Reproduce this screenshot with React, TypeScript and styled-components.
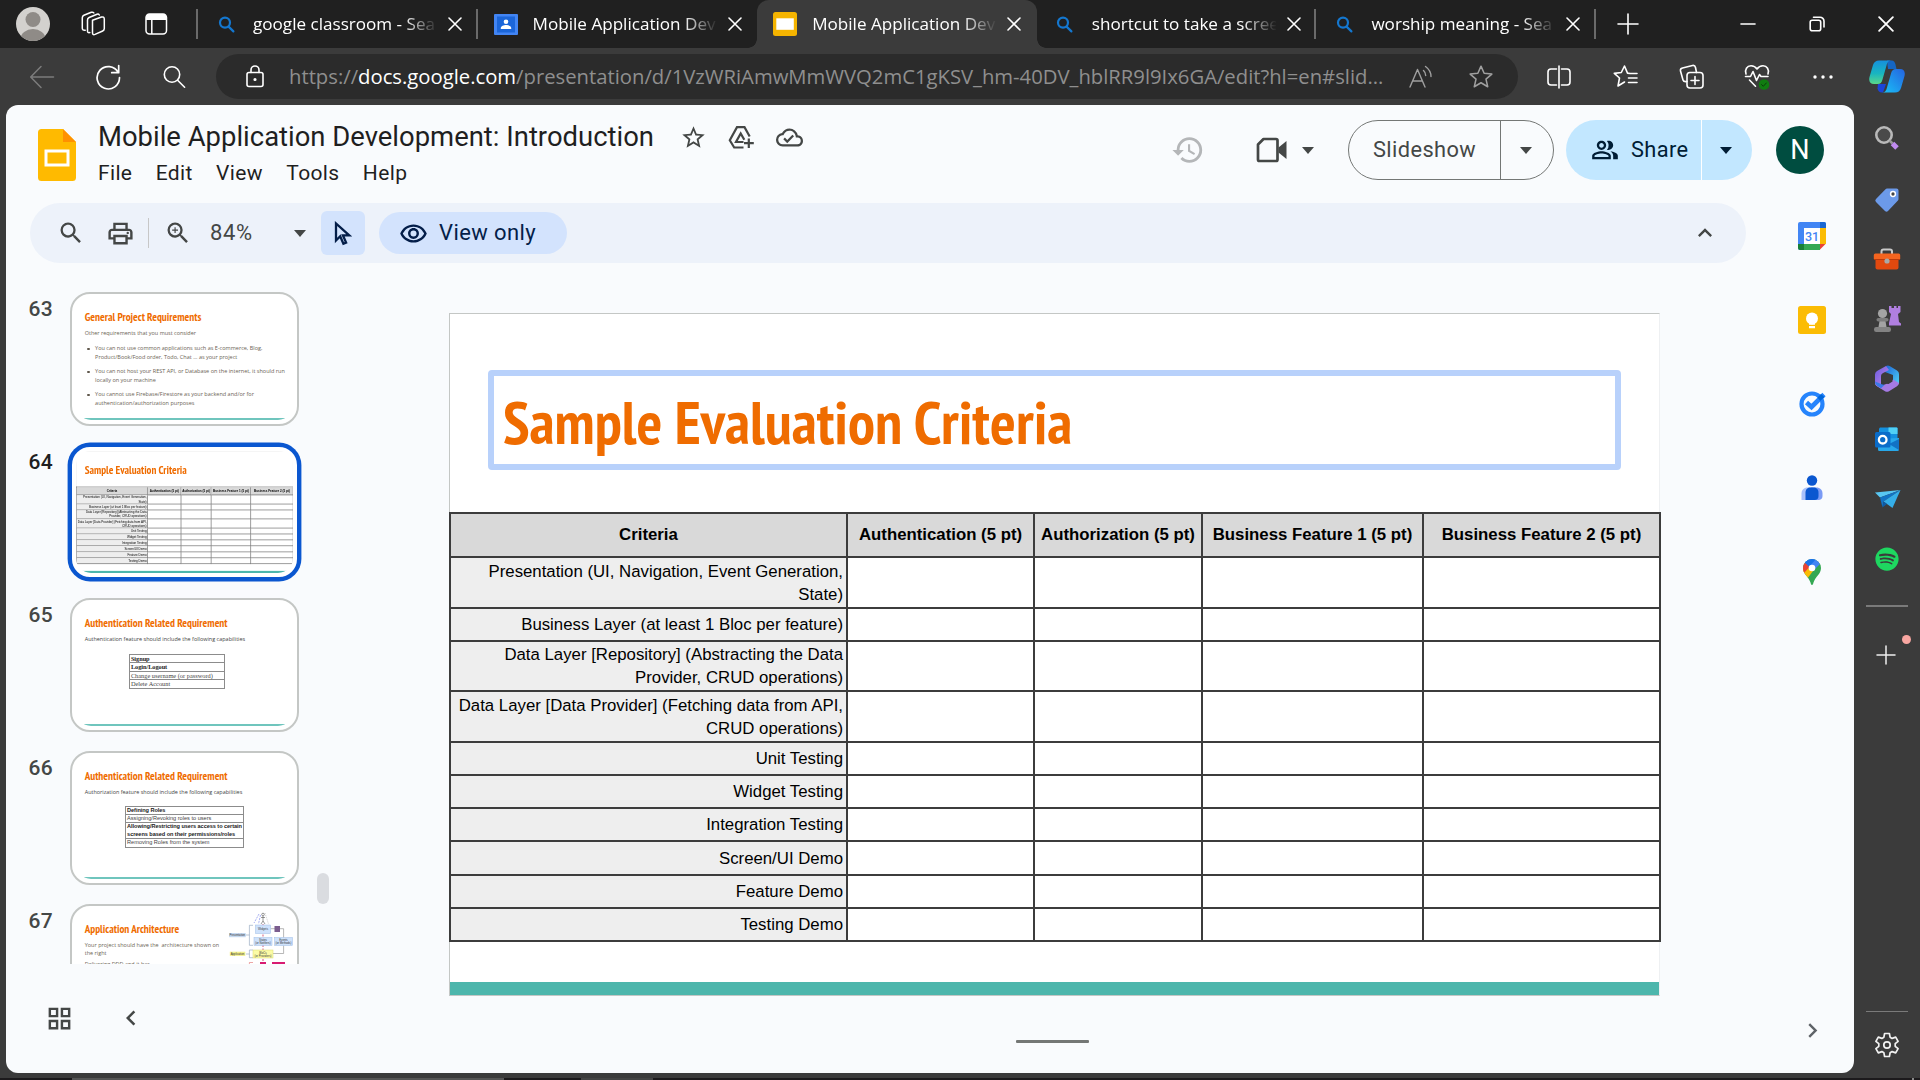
import React from 'react';
import styled, { createGlobalStyle, css } from 'styled-components';
import {
  MdSearch, MdOutlinePrint, MdZoomIn, MdOutlineRemoveRedEye, MdKeyboardArrowUp,
  MdHistory, MdOutlinePeopleAlt, MdStarBorder, MdOutlineCloudDone,
  MdGridView, MdChevronLeft, MdChevronRight,
} from 'react-icons/md';
import { FaSpotify } from 'react-icons/fa';

const UI = `Roboto, "Liberation Sans", sans-serif`;
const CHROME = `"Open Sans", "Noto Sans", sans-serif`;
const NARROW = `"PT Sans Narrow", "Open Sans", sans-serif`;
const ARIAL = `"Liberation Sans", Arial, sans-serif`;

const GlobalStyle = createGlobalStyle`
  *, *::before, *::after { box-sizing: border-box; }
  body { margin: 0; background: #3b3b3b; font-family: ${UI}; overflow: hidden; }
  svg { display: block; flex: none; }
`;

/* ---------- browser window ---------- */
const Window = styled.div`
  width: 1920px; height: 1080px; display: flex; flex-direction: column; background: #3b3b3b; overflow: hidden;
`;
const TabBar = styled.div`
  height: 48px; flex: none; display: flex; align-items: center; background: #202020; color: #fff;
`;
const Slot = styled.div<{ $w: number }>`
  width: ${p => p.$w}px; flex: none; display: flex; align-items: center; justify-content: center; color: #fff;
`;
const StripDivider = styled.div`
  width: 2px; height: 30px; margin: 0 0 0 4px; background: #6a6a6a;
`;
const Tab = styled.div<{ $active?: boolean; $divider?: boolean }>`
  position: relative; flex: none; width: 279.6px; height: 48px; display: flex; align-items: center; padding-left: 16px;
  ${p => p.$active && css`
    background: #3b3b3b; border-radius: 12px 12px 0 0;
    &::before, &::after { content: ''; position: absolute; bottom: 0; width: 9px; height: 9px; }
    &::before { left: -9px; background: radial-gradient(circle at 0 0, transparent 8.5px, #3b3b3b 9px); }
    &::after { right: -9px; background: radial-gradient(circle at 100% 0, transparent 8.5px, #3b3b3b 9px); }
  `}
  ${p => p.$divider && css`
    background: linear-gradient(#6a6a6a, #6a6a6a) right 0 center / 2px 30px no-repeat;
  `}
`;
const TabIcon = styled.div`width: 24px; display: flex; justify-content: center;`;
const TabLabel = styled.div`
  width: 184px; margin: 0 2px 0 15px; overflow: hidden; white-space: nowrap;
  font: 400 17.1px/26px ${CHROME}; color: #fff;
  mask-image: linear-gradient(90deg, #000 150px, transparent 185px);
`;
const TabClose = styled.div`width: 32px; display: flex; justify-content: center;`;
const WindowControls = styled.div`display: flex; margin-left: auto;`;

const AddressRow = styled.div`
  height: 57px; flex: none; display: flex; align-items: center; padding-left: 9px; background: #3b3b3b;
`;
const AddressBar = styled.div`
  width: 1302px; height: 45px; margin: 0 8px 0 9px; display: flex; align-items: center;
  padding-left: 30px; border-radius: 23px; background: #2b2b2b; color: #fff;
`;
const Url = styled.div`
  width: 1098px; margin-left: 25px; padding-bottom: 2px; white-space: nowrap; font: 400 20.25px/30px ${CHROME}; color: #8f8f8f;
  b { font-weight: 400; color: #fff; }
`;

const Body = styled.div`flex: 1; display: flex; padding: 0 0 5px 6px; min-height: 0;`;
const Sidebar = styled.div`
  width: 66px; flex: none; display: flex; flex-direction: column; align-items: center;
`;
const SideItem = styled.div<{ $h: number }>`
  position: relative; height: ${p => p.$h}px; flex: none; width: 66px; display: flex; align-items: center; justify-content: center;
`;
const SideRule = styled.div`width: 42px; height: 1.5px; background: #7a7a7a; flex: none;`;
const Dot = styled.i`
  position: absolute; right: 9px; top: 28px; width: 9px; height: 9px; border-radius: 50%; background: #f8a6a1;
`;
const SideGap = styled.div`height: 16px; flex: none;`;
const SidePlus = styled.div`
  position: relative; width: 66px; height: 97px; flex: none; padding-right: 2px;
  display: flex; align-items: center; justify-content: center;
`;
const SideGear = styled.div`display: flex; color: #f2f2f2; padding-top: 5px;`;
const Spacer = styled.div`flex: 1;`;
const TaskStrip = styled.div`height: 2px; flex: none; display: flex;`;
const Strip = styled.div<{ $w?: number; $c: string }>`
  ${p => (p.$w ? `width: ${p.$w}px;` : 'flex: 1;')} background: ${p => p.$c};
`;

/* ---------- document page ---------- */
const Page = styled.div`
  width: 1848px; flex: none; display: flex; flex-direction: column; overflow: hidden;
  border-radius: 12px; background: #f9fbfd; color: #1f1f1f;
`;
const Header = styled.div`
  height: 98px; flex: none; display: flex; padding: 15px 30px 0 32px;
`;
const Logo = styled.div`padding-top: 9px;`;
const TitleBlock = styled.div`margin-left: 22px;`;
const TitleRow = styled.div`height: 33px; display: flex; align-items: center; color: #444746;`;
const DocTitle = styled.div`
  width: 571px; padding-top: 1px; white-space: nowrap; font: 400 27.45px/32px ${UI}; color: #1f1f1f;
`;
const TitleIcon = styled.div`width: 48.3px; display: flex; justify-content: center; padding-top: 2px;`;
const Menus = styled.div`
  display: flex; gap: 23.4px; margin-top: 8px; font: 400 21px/24px ${UI}; letter-spacing: .35px; color: #1f1f1f;
`;
const HeaderActions = styled.div`
  height: 60px; margin-left: auto; display: flex; align-items: center; color: #444746;
`;
const HeaderSlot = styled.div`width: 84px; display: flex; justify-content: center;`;
const CallCaret = styled.div`width: 34px; margin: 0 13px 0 -13px;`;
const SplitButton = styled.div<{ $share?: boolean }>`
  height: 60px; display: flex; border-radius: 30px; overflow: hidden;
  font: 450 21.8px/58px ${UI}; letter-spacing: .4px;
  ${p => p.$share
    ? css`width: 186px; margin-left: 12px; background: #c2e7ff; color: #001d35; line-height: 60px;`
    : css`width: 206px; border: 1px solid #747775; color: #444746;`}
`;
const SplitMain = styled.div<{ $share?: boolean }>`
  display: flex; align-items: center;
  ${p => p.$share
    ? css`width: 136px; padding-left: 25px; gap: 12px; border-right: 1.5px solid #fff;`
    : css`width: 152px; padding-left: 24px; border-right: 1px solid #747775;`}
`;
const SplitArrow = styled.div`flex: 1; display: flex; align-items: center; justify-content: center; padding-right: 2px;`;
const Avatar = styled.div`
  width: 48px; height: 48px; margin-left: 24px; border-radius: 50%; background: #004d40; color: #fff;
  font: 400 27px/49px ${UI}; text-align: center;
`;

const Main = styled.div`flex: 1; display: flex; min-height: 0;`;
const Left = styled.div`width: 1764px; flex: none; display: flex; flex-direction: column;`;
const Toolbar = styled.div`
  width: 1716px; height: 60px; margin-left: 24px; flex: none; display: flex; align-items: center;
  padding: 0 27px 0 15px; border-radius: 30px; background: #edf2fa; color: #444746;
`;
const Tool = styled.div<{ $w: number }>`width: ${p => p.$w}px; display: flex; justify-content: center;`;
const ToolRule = styled.div`width: 1px; height: 30px; margin-left: 3px; background: #c7c7c7;`;
const Zoom = styled.div`
  width: 73px; margin-left: 3px; font: 450 22px/30px ${UI}; letter-spacing: .6px; color: #444746;
`;
const Pointer = styled.div`
  width: 44px; height: 44px; margin-left: 4px; border-radius: 6px; background: #d3e3fd;
  display: flex; align-items: center; justify-content: center;
`;
const ViewOnly = styled.div`
  width: 188px; height: 42px; margin-left: 14px; display: flex; align-items: center; gap: 11px; padding-left: 20px;
  border-radius: 21px; background: #d3e3fd; color: #041e49; font: 450 22px/40px ${UI}; letter-spacing: .4px; white-space: nowrap;
`;
const Workspace = styled.div`flex: 1; display: flex; min-height: 0;`;
const Film = styled.div`width: 330px; flex: none; display: flex; flex-direction: column;`;
const FilmScroll = styled.div`height: 701px; display: flex; overflow: hidden;`;
const FilmList = styled.div`width: 311px; padding-top: 29px; display: flex; flex-direction: column; gap: 19px;`;
const FilmRow = styled.div`height: 134px; flex: none; display: flex;`;
const FilmNo = styled.div<{ $on?: boolean }>`
  width: 47px; margin-right: 17px; text-align: right; font: 500 21px/34px ${UI}; letter-spacing: .3px;
  color: ${p => (p.$on ? '#1f1f1f' : '#444746')};
`;
const Frame = styled.div<{ $on?: boolean }>`
  width: 229px; height: 134px; padding: 4px; background: #fff; border-radius: 20px;
  border: 2px solid ${p => (p.$on ? '#0b57d0' : '#c4c7c5')};
  ${p => p.$on && css`box-shadow: 0 0 0 2.4px #0b57d0;`}
`;
const Thumb = styled.div`
  width: 217px; height: 122px; display: flex; flex-direction: column; overflow: hidden; border-radius: 15px; background: #fff;
`;
const ThumbBody = styled.div`flex: 1; display: flex; min-height: 0;`;
const ThumbText = styled.div`flex: 1; min-width: 0; padding: 12px 0 0 8.7px; white-space: nowrap;`;
const ThumbBar = styled.div`height: 2px; background: #6fc5bd;`;
const ThumbTitle = styled.div`font: 700 11.05px/14px ${NARROW}; color: #ef6c00;`;
const ThumbPara = styled.div<{ $dark?: boolean; $ls?: number; $mt?: number }>`
  margin-top: ${p => p.$mt ?? 5}px; font: 400 5.47px/8px ${CHROME}; letter-spacing: ${p => p.$ls || 0}px; color: ${p => (p.$dark ? '#444' : '#6b6355')};
`;
const Bullets = styled.ul`
  margin: 6.5px 0 0; padding: 0; list-style: none; font: 400 5.52px/9.9px ${CHROME}; color: #6b6355;
`;
const Bullet = styled.li`
  display: flex; margin-bottom: 3.2px;
  &::before { content: ''; width: 2.4px; height: 2.4px; margin: 4px 5.4px 0 2.6px; border-radius: 50%; background: #5f574b; }
`;
const MiniTable = styled.div<{ $l: number; $w: number; $t: number; $serif?: boolean }>`
  width: ${p => p.$w}px; margin: ${p => p.$t}px 0 0 ${p => p.$l}px; border: solid #8c8c8c; border-width: 1px 1px 0 1px;
  font: 400 ${p => (p.$serif ? '6.35px' : '5.6px')}/7.5px ${p => (p.$serif ? '"Liberation Serif", serif' : ARIAL)}; color: #444;
`;
const MiniCell = styled.div<{ $b?: boolean; $h?: number }>`
  height: ${p => p.$h || 8.45}px; padding-left: .6px; border-bottom: 1px solid #8c8c8c; font-weight: ${p => (p.$b ? 700 : 400)};
  ${p => p.$b && 'color: #222; letter-spacing: -.06px;'}
`;
const Shrink = styled.div`width: 1211px; height: 683px; flex: none; transform: scale(.1792); transform-origin: 0 0;`;
const Track = styled.div`width: 12px; padding-top: 610px;`;
const Grip = styled.div`height: 31px; border-radius: 6px; background: #dadce0;`;
const FilmFoot = styled.div`
  height: 109px; display: flex; align-items: center; gap: 42px; padding: 0 0 1px 39px; color: #444746;
`;

const Canvas = styled.div`
  width: 1434px; flex: none; display: flex; flex-direction: column; align-items: flex-start;
`;
const SlideFrame = styled.div`margin: 50px 0 0 113px;`;
const SlideBox = styled.div`
  width: 1211px; height: 683px; display: flex; flex-direction: column; background: #fff;
  border: 1px solid #c4c7c5; border-right-color: #eef0f2;
`;
const TitleArea = styled.div<{ $focus?: boolean }>`
  width: 1133px; height: 100px; margin: 56px 0 0 38px; padding: 0 0 0 ${p => (p.$focus ? 9 : 4)}px; border-radius: 4px; flex: none;
  border: 6px solid ${p => (p.$focus ? '#b8d1fb' : 'transparent')};
  font: 700 60.55px/92px ${NARROW}; color: #ef6c00; white-space: nowrap;
`;
const Grid = styled.div<{ $line: number; $c: string }>`
  --line: ${p => p.$line}px; --ink: ${p => p.$c};
  width: 1212px; margin: 42px 0 0 -1px; flex: none; display: grid;
  grid-template-columns: 397px 187px 168px 221px 237px;
  grid-template-rows: 44px 51px 33px 50px 51px 33px 33px 33px 34px 33px 33px;
  border: solid var(--ink); border-width: var(--line) 0 0 var(--line);
`;
const Cell = styled.div<{ $kind?: 'head' | 'row' }>`
  border: solid var(--ink); border-width: 0 var(--line) var(--line) 0;
  font: 400 16.8px/22.6px ${ARIAL}; color: #000; display: flex; align-items: center; white-space: pre;
  ${p => p.$kind === 'head' && css`background: #d9d9d9; font-weight: 700; justify-content: center;`}
  ${p => p.$kind === 'row' && css`background: #eee; justify-content: flex-end; text-align: right; padding: 2px 3px 0 0;`}
`;
const Teal = styled.div`margin-top: auto; height: 13px; flex: none; background: #4db6ac;`;
const NotesGrip = styled.div`width: 73px; height: 3px; margin: 44px 0 0 680px; border-radius: 1px; background: #747775;`;

const Panel = styled.div`
  width: 84px; display: flex; flex-direction: column; align-items: center; padding-bottom: 28px; color: #5f6368;
`;
const PanelItem = styled.div`width: 28px; height: 84px; display: flex; align-items: center; justify-content: center;`;
const PanelTop = styled.div`margin-top: -9px;`;

/* ---------- drawn icons ---------- */
type SvgProps = { w: number; h?: number; vb?: string; stroke?: string; sw?: number; children: React.ReactNode };
const Ico = ({ w, h, vb = '0 0 24 24', stroke = 'currentColor', sw = 1.5, children }: SvgProps) => (
  <svg width={w} height={h || w} viewBox={vb} fill="none" stroke={stroke} strokeWidth={sw} strokeLinecap="round" strokeLinejoin="round">{children}</svg>
);
const Cross = ({ s }: { s: number }) => <Ico w={s} vb="0 0 14 14" sw={1.6}><path d="M1 1l12 12M13 1L1 13" /></Ico>;
const Lens = () => <Ico w={17} h={17} vb="0 0 17 17" stroke="#1477cf" sw={2.2}><circle cx="7" cy="6.6" r="5" /><path d="M10.6 10.6l4.8 4.8" /></Ico>;
const Caret = () => <svg width="14" height="7" viewBox="0 0 14 7"><path d="M1 0h12L7 7z" fill="currentColor" /></svg>;

const Person = () => (
  <svg width="34" height="34" viewBox="0 0 34 34">
    <defs><clipPath id="face"><circle cx="17" cy="17" r="17" /></clipPath></defs>
    <circle cx="17" cy="17" r="17" fill="#d3d1ce" />
    <g clipPath="url(#face)" fill="#8f8b87"><circle cx="17" cy="12.5" r="7.5" /><ellipse cx="17" cy="32" rx="12.5" ry="10" /></g>
  </svg>
);
const Workspaces = () => (
  <Ico w={26} h={26} vb="0 0 26 26">
    <path d="M12.5 9.2l9-3.2q2.6-.6 2.8 2v9.5q0 1.8-1.6 2.5l-7.7 3.4q-2.5.9-2.5-1.6V9.2z" />
    <path d="M9.8 21.6q-2.3.6-2.3-1.600V9q0-1.800 1.600-2.500L17 3.200q1.500-.6 2.300.8" />
    <path d="M5.200 19.200q-2.900.4-2.900-1.900V6.800q0-1.800 1.600-2.500l7.400-3q1.700-.5 2.500.6" />
  </Ico>
);
const TabActions = () => (
  <svg width="23" height="22" viewBox="0 0 23 22"><rect x="1" y="1" width="20.500" height="20" rx="3.500" fill="none" stroke="#fff" strokeWidth="1.500" /><path d="M1 7V4.500A3.500 3.500 0 014.500 1h13.500a3.500 3.500 0 013.500 3.500V7z" fill="#fff" /><path d="M6.800 7v14" stroke="#fff" strokeWidth="1.500" /></svg>
);
const Classroom = () => (
  <svg width="24" height="21" viewBox="0 0 24 21"><rect width="24" height="21" fill="#4285f4" rx="1" /><rect x="3" y="2.500" width="18" height="16" fill="#1b66d9" /><circle cx="12" cy="7.800" r="2.300" fill="#fff" /><path d="M6.800 15v-1c0-2 3-3 5.200-3s5.200 1 5.200 3v1z" fill="#fff" /></svg>
);
const SlidesTab = () => <svg width="24" height="24" viewBox="0 0 24 24"><rect width="24" height="24" rx="2.500" fill="#f5b400" /><rect x="3.300" y="6.300" width="17.500" height="11.500" fill="#fff" /></svg>;
const SlidesLogo = () => (
  <svg width="38" height="52" viewBox="0 0 38 52"><path d="M3.500 0H25l13 13v35.500a3.500 3.500 0 01-3.500 3.500h-31A3.500 3.500 0 010 48.500v-45A3.500 3.500 0 013.500 0z" fill="#ffba00" /><path d="M25 0l13 13H25z" fill="#ff9100" /><rect x="8" y="22" width="22" height="14" fill="none" stroke="#fff" strokeWidth="3" /></svg>
);
const Drive = () => (
  <svg width="27" height="25" viewBox="0 0 27 25" fill="none" stroke="currentColor" strokeWidth="2.200">
    <path d="M15.500 22.500H6.200L1.800 15.300 9 2.200h7.500l5.200 9.300" /><path d="M15.500 17H8l4.700-8.500 3.600 6.300" /><path d="M20.800 13.500v9.500M16 18.200h9.800" />
  </svg>
);
const Camera = () => (
  <svg width="32" height="26" viewBox="0 0 32 26"><path d="M7.500 2H20q1.500 0 1.500 1.500v19q0 1.500-1.500 1.500H3.500Q2 24 2 22.500v-15z" fill="none" stroke="currentColor" strokeWidth="2.700" strokeLinejoin="round" /><path d="M22.500 10.500L30.500 4v18l-8-6.500z" fill="currentColor" /></svg>
);
const Cursor = () => (
  <svg width="18" height="25" viewBox="0 0 18 25"><path d="M2 2.500v17l4.200-4.300 3.200 7.600 2.700-1.200-3.200-7.300h6.300z" fill="none" stroke="#041e49" strokeWidth="2.300" strokeLinejoin="miter" /></svg>
);
const Copilot = () => (
  <svg width="36" height="33" viewBox="0 0 36 33">
    <defs>
      <linearGradient id="cpA" x1="0" y1="0" x2="0" y2="1"><stop offset="0" stopColor="#1690dd" /><stop offset=".55" stopColor="#19b5c0" /><stop offset="1" stopColor="#5ad78a" /></linearGradient>
      <linearGradient id="cpB" x1="1" y1="0" x2="0" y2="1"><stop offset="0" stopColor="#2563e0" /><stop offset="1" stopColor="#19c1f7" /></linearGradient>
    </defs>
    <path d="M9 24h8l-3 8.500h-1c-3 0-4-2-4.500-4z" fill="#1b44d8" />
    <path d="M18 .5h4.500c2.500 0 3.500 2 4 4L27.500 9H19z" fill="#1566c4" />
    <path d="M10 .5h12c-3 0-4 3-4.500 5l-4 14c-.8 3-2 4.500-5 4.500H5C1 24-.5 21 .5 17L4 5C5 2 7 .5 10 .5z" fill="url(#cpA)" />
    <path d="M26 32.500H13.500c3 0 4-3 4.500-5l4-14c.8-3 2-4.500 5-4.500h4c4 0 5.500 3 4.500 7L32 28c-1 3-3 4.500-6 4.500z" fill="url(#cpB)" />
  </svg>
);
const Calendar = () => (
  <svg width="28" height="28" viewBox="0 0 28 28">
    <rect width="28" height="28" rx="2" fill="#4285f4" /><path d="M22 0h4a2 2 0 012 2v4h-6z" fill="#1967d2" /><path d="M22 6h6v16h-6z" fill="#fbbc04" /><path d="M6 22h16v6H6z" fill="#34a853" /><path d="M0 22h6v6H2a2 2 0 01-2-2z" fill="#188038" /><path d="M22 22h6v6h-6z" fill="#f9fbfd" /><path d="M22 22h5.500L22 27.500z" fill="#ea4335" /><path d="M6 6h16v16H6z" fill="#fff" />
    <text x="14" y="18.500" textAnchor="middle" fontFamily="Roboto, sans-serif" fontWeight="500" fontSize="12.500" fill="#4285f4">31</text>
  </svg>
);
const Keep = () => <svg width="28" height="28" viewBox="0 0 28 28"><rect width="28" height="28" rx="2.500" fill="#fbbc04" /><circle cx="14" cy="12.500" r="6" fill="#fff" /><path d="M11 16h6v2.700h-6zM11 20h6v2.200h-6z" fill="#fff" /></svg>;
const Tasks = () => (
  <svg width="28" height="28" viewBox="0 0 28 28"><circle cx="14" cy="14" r="10.500" fill="none" stroke="#2684fc" strokeWidth="4.200" /><path d="M8.500 12.500l5 4.500L26 4.500" fill="none" stroke="#2684fc" strokeWidth="4.600" /><path d="M19.500 7.500l3.500-3.600 3.500 3.200-4.300 3.800z" fill="#0066da" /></svg>
);
const Contacts = () => (
  <svg width="22" height="26" viewBox="0 0 22 26"><circle cx="11" cy="5.500" r="5.200" fill="#0b57d0" /><path d="M.5 25v-6.500c0-3.500 2.500-6 6-6H12V25z" fill="#a8c0fb" /><path d="M21.500 18.500c0-3.500-2.500-6-6-6H10V25h8q3.500-.5 3.500-4z" fill="#7b9bf5" /><path d="M4.500 25v-7.500c0-3 2-5 5-5h3c3 0 5 2 5 5V21q0 4-4 4z" fill="#0b57d0" /></svg>
);
const Maps = () => (
  <svg width="18" height="26" viewBox="0 0 18 26">
    <defs><clipPath id="pin"><path d="M9 0a9 9 0 019 9c0 6-5.500 8.500-7.500 14.500-.4 1.300-.6 2.500-1.500 2.500s-1.100-1.200-1.500-2.500C5.500 17.500 0 15 0 9a9 9 0 019-9z" /></clipPath></defs>
    <g clipPath="url(#pin)"><path d="M0 0h18v26H0z" fill="#34a853" /><path d="M0 8h10v4L4 20 0 20z" fill="#fbbc04" /><path d="M0 0h14l3.500 4.500L10 12 5 9z" fill="#4285f4" /><path d="M2 0h11L6 8 1.500 4z" fill="#1a73e8" /><path d="M1.500 3.500l5 4.500-6 6.500L-1 9z" fill="#ea4335" /></g><circle cx="9" cy="9" r="3.300" fill="#fff" />
  </svg>
);
const SideSearch = () => (
  <svg width="26" height="26" viewBox="0 0 26 26"><circle cx="10" cy="10" r="7.700" fill="#4a4a4a" stroke="#b9b9b9" strokeWidth="2.600" /><path d="M15.500 15.500l3 3" stroke="#999" strokeWidth="2.500" /><path d="M18.500 18.500l4.500 4.500" stroke="#c08bef" strokeWidth="5" /></svg>
);
const Tag = () => (
  <svg width="26" height="26" viewBox="0 0 26 26"><path d="M13 1.500h9.500a2 2 0 012 2V12q0 1-.8 1.800L14 24q-1.500 1.500-3 0l-9-9q-1.500-1.500 0-3l9.500-9.800q.6-.7 1.500-.7z" fill="#6c9ae9" /><circle cx="19" cy="7" r="2.400" fill="#444" stroke="#fff" strokeWidth="1.500" /></svg>
);
const Toolbox = () => (
  <svg width="28" height="24" viewBox="0 0 28 24"><path d="M8.500 7V4.500q0-2 2-2h6.500q2 0 2 2V7" fill="none" stroke="#c9c9c9" strokeWidth="2" /><path d="M2.500 11h23v9.500a2 2 0 01-2 2h-19a2 2 0 01-2-2z" fill="#e2490f" /><rect x=".8" y="6.500" width="26.400" height="6.500" rx="1.500" fill="#f4641f" /><path d="M1 12.500h26" stroke="#b93a0c" /><circle cx="14" cy="14" r="2.600" fill="#a9a9a9" /></svg>
);
const Chess = () => (
  <svg width="28" height="28" viewBox="0 0 28 28"><g fill="#b07fe0"><path d="M16 1h2.500v2H21V1h2.500v2H25V1h2.500v6L25 9l1 8 2 1.500V20.500H16V18l2-9-2-2z" /></g><g fill="#a3a3a3"><circle cx="9.500" cy="8.500" r="4.600" /><path d="M7 13h5l1.500 9h-8z" /></g><rect x="3.500" y="13" width="12" height="3.600" rx="1.800" fill="#7c7c7c" /><rect x="1" y="22" width="17" height="5" rx="2.200" fill="#838383" /></svg>
);
const M365 = () => (
  <svg width="26" height="28" viewBox="0 0 26 28">
    <defs><linearGradient id="mA" x1="0" y1="0" x2="1" y2="1"><stop offset="0" stopColor="#1b64d8" /><stop offset="1" stopColor="#4fd0f2" /></linearGradient><linearGradient id="mB" x1="0" y1="0" x2="1" y2="1"><stop offset="0" stopColor="#6a5be0" /><stop offset="1" stopColor="#c98be8" /></linearGradient></defs>
    <path d="M12 1q2-1 4 .3l7 4.200q2 1.200 2 3.500v10l-6-3V10l-8-3z" fill="url(#mA)" />
    <path d="M12 1L3 6Q1 7.200 1 9.500V18q0 2 2 3l4 2.500V11q0-2 2-3l6-3z" fill="url(#mB)" />
    <path d="M1 17q0 3 2 4.200l8 5q2 1.200 4 0l8-5q2-1.200 2-3.200l-6-3.500-8 5q-2 1-4 .4z" fill="#a57ae4" /><path d="M1 16.500q0 3 2 4.200l4 2.500 4-3.700q-3 .5-5-1z" fill="#3a7be8" />
    <path d="M10.500 9.500l5-.5 3 3v4.500l-4 2.500-5-.5-2-2.500v-4z" fill="#3b3b3b" />
  </svg>
);
const Outlook = () => (
  <svg width="26" height="26" viewBox="0 0 26 26"><path d="M6 1.500h16.500a1 1 0 011 1V14H5V2.500z" fill="#1490df" /><path d="M14.500 1.500h8a1 1 0 011 1V8h-9z" fill="#50d0f5" /><path d="M4 13l21-1v11.500a1.500 1.500 0 01-1.500 1.500h-18A1.500 1.500 0 014 23.500z" fill="#28a8ea" /><path d="M25 13v11L15 18z" fill="#1272c4" /><rect x="1" y="6" width="15.500" height="15.500" rx="1.500" fill="#0a6cc9" /><circle cx="8.700" cy="13.700" r="3.800" fill="none" stroke="#fff" strokeWidth="2.300" /></svg>
);
const Plane = () => (
  <svg width="27" height="20" viewBox="0 0 27 20"><path d="M1 3.500L26.500 1 6 8.500z" fill="#58c6f2" /><path d="M6 8.500L26.500 1 9.500 12.500 8.500 18.500z" fill="#1272c4" /><path d="M26.500 1L18.500 19l-9-6.500z" fill="#35aee8" /><path d="M8.500 18.500l1-6 3.500 2.400z" fill="#0d5ba5" /></svg>
);
const Gear = () => (
  <Ico w={26} vb="0 0 26 26" sw={1.7}><path d="M10.600 1.500h4.800l.7 3.700 2 1.200 3.600-1.300 2.400 4.200-2.900 2.400v2.600l2.900 2.400-2.400 4.200-3.600-1.300-2 1.200-.7 3.700h-4.800l-.7-3.700-2-1.200-3.600 1.300-2.400-4.200 2.900-2.400v-2.600L1.900 9.300l2.400-4.200 3.600 1.300 2-1.200z" /><circle cx="13" cy="13" r="3.200" /></Ico>
);
const starPath = 'M12 2l2.900 6.600 7.100.7-5.400 4.700 1.600 7-6.200-3.700L5.800 21l1.600-7L2 9.300l7.100-.7z';

const Diagram = () => (
  <svg width="66" height="60" viewBox="0 0 66 60" fontFamily="Liberation Sans, sans-serif" fontSize="2.800" textAnchor="middle" fill="#333">
    <circle cx="36" cy="4.500" r="1.300" fill="none" stroke="#555" strokeWidth=".6" /><path d="M36 6v5M34 7.500h4M36 11l-2 3M36 11l2 3" stroke="#555" strokeWidth=".6" />
    <path d="M32 4l-5 9M33.500 5l-2 9" stroke="#6c7bea" strokeWidth=".6" strokeDasharray="2 1" /><path d="M38 3l3.500 11" stroke="#999" strokeWidth=".5" strokeDasharray="1 1" />
    <path d="M36 14v46" stroke="#d65a7b" strokeWidth="1" strokeDasharray="2 1.500" />
    <path d="M26 15.300h-3.600v20H26M22.400 25H19M26 40h-3.600v7.700H26M22.400 44H19" fill="none" stroke="#8aa0b8" strokeWidth=".6" />
    <path d="M26 52.500h-3.600V60" fill="none" stroke="#e06a6a" strokeWidth=".6" />
    <path d="M43.600 18.700h13v9M56.600 35.500v8H46" fill="none" stroke="#888" strokeWidth=".6" />
    <rect x="28.500" y="15" width="15" height="8.500" fill="#cfe2fb" stroke="#9dbce6" strokeWidth=".5" /><rect x="47.500" y="16" width="5.500" height="6" fill="#7b5d8e" />
    <rect x="27" y="27.500" width="18" height="8" fill="#cfe2fb" stroke="#9dbce6" strokeWidth=".5" /><rect x="47.500" y="27.500" width="18" height="8" fill="#cfe2fb" stroke="#9dbce6" strokeWidth=".5" />
    <rect x="2" y="23" width="16.700" height="4.200" fill="#c5d8ee" /><rect x="2.800" y="41.700" width="15.500" height="4.200" fill="#f3f08d" /><rect x="26" y="40" width="20" height="8" fill="#fbfba6" stroke="#dcdc70" strokeWidth=".5" />
    <rect x="33" y="52" width="6" height="8" fill="#d81b72" /><rect x="45" y="52" width="13" height="8" fill="#d81b72" />
    <text x="36" y="20.300">Widgets</text><text x="10.300" y="26.100">Presentation</text><text x="36" y="31">States</text><text x="36" y="34.400">(or Notifiers)</text><text x="56.500" y="31">Events</text><text x="56.500" y="34.400">(or Methods)</text><text x="10.500" y="44.800">Application</text><text x="36" y="43.500">BloCs</text><text x="36" y="46.900">(or Providers)</text>
  </svg>
);

/* ---------- data ---------- */
const tabs: { label: string; icon: React.ReactNode; active?: boolean; divider?: boolean }[] = [
  { label: 'google classroom - Sea', icon: <Lens />, divider: true },
  { label: 'Mobile Application Dev', icon: <Classroom /> },
  { label: 'Mobile Application Dev', icon: <SlidesTab />, active: true },
  { label: 'shortcut to take a scree', icon: <Lens />, divider: true },
  { label: 'worship meaning - Sea', icon: <Lens />, divider: true },
];
const heads = ['Criteria', 'Authentication (5 pt)', 'Authorization (5 pt)', 'Business Feature 1 (5 pt)', 'Business Feature 2 (5 pt)'];
const rows = [
  'Presentation (UI, Navigation, Event Generation,\nState)', 'Business Layer (at least 1 Bloc per feature)',
  'Data Layer [Repository] (Abstracting the Data\nProvider, CRUD operations)',
  'Data Layer [Data Provider] (Fetching data from API,\nCRUD operations)',
  'Unit Testing', 'Widget Testing', 'Integration Testing', 'Screen/UI Demo', 'Feature Demo', 'Testing Demo',
];

const CriteriaSlide = ({ small }: { small?: boolean }) => (
  <SlideBox>
    <TitleArea $focus={!small}>Sample Evaluation Criteria</TitleArea>
    <Grid $line={small ? 4 : 2} $c={small ? '#777' : '#3c3c3c'}>
      {heads.map(h => <Cell key={h} $kind="head">{h}</Cell>)}
      {rows.map(r => (
        <React.Fragment key={r}><Cell $kind="row">{r}</Cell><Cell /><Cell /><Cell /><Cell /></React.Fragment>
      ))}
    </Grid>
    <Teal />
  </SlideBox>
);

const FilmItem = ({ no, on, children }: { no: number; on?: boolean; children: React.ReactNode }) => (
  <FilmRow><FilmNo $on={on}>{no}</FilmNo><Frame $on={on}><Thumb>{children}</Thumb></Frame></FilmRow>
);

export default function App() {
  return (
    <Window>
      <GlobalStyle />
      <TabBar>
        <Slot $w={66}><Person /></Slot>
        <Slot $w={54}><Workspaces /></Slot>
        <Slot $w={72}><TabActions /></Slot>
        <StripDivider />
        {tabs.map((t, i) => (
          <Tab key={i} $active={t.active} $divider={t.divider}>
            <TabIcon>{t.icon}</TabIcon><TabLabel>{t.label}</TabLabel><TabClose><Cross s={14} /></TabClose>
          </Tab>
        ))}
        <Slot $w={64}><Ico w={22} vb="0 0 22 22" sw={1.6}><path d="M11 1v20M1 11h20" /></Ico></Slot>
        <WindowControls>
          <Slot $w={69}><Ico w={16} vb="0 0 16 16" sw={1.6}><path d="M1 8h14" /></Ico></Slot>
          <Slot $w={69}><Ico w={16} vb="0 0 16 16" sw={1.6}><rect x="1.200" y="4.200" width="10.500" height="10.500" rx="2" /><path d="M4.500 1.200H11a4 4 0 014 4V11" /></Ico></Slot>
          <Slot $w={69}><Cross s={16} /></Slot>
        </WindowControls>
      </TabBar>
      <AddressRow>
        <Slot $w={66}><Ico w={26} vb="0 0 26 26" stroke="#7c7c7c"><path d="M24.500 13H2M12 2.500L1.700 13 12 23.500" /></Ico></Slot>
        <Slot $w={66}><Ico w={26} vb="0 0 26 26" sw={1.7}><path d="M23.200 8.500A11.200 11.200 0 1024.500 13.500M23.700 1.500v7.200h-7" /></Ico></Slot>
        <Slot $w={66}><Ico w={24} vb="0 0 24 24" sw={1.6}><circle cx="10" cy="9.500" r="7.700" /><path d="M15.600 15.200l7 7" /></Ico></Slot>
        <AddressBar>
          <Ico w={18} h={23} vb="0 0 18 23" sw={1.6}><rect x="1" y="7.500" width="16" height="14" rx="2" /><path d="M5 7.500V5a4 4 0 018 0v2.500" /><circle cx="9" cy="14.500" r=".8" fill="#fff" /></Ico>
          <Url>https://<b>docs.google.com</b>/presentation/d/1VzWRiAmwMmWVQ2mC1gKSV_hm-40DV_hblRR9l9Ix6GA/edit?hl=en#slid...</Url>
          <Slot $w={68}><Ico w={24} vb="0 0 24 24" stroke="#a0a0a0" sw={1.4}><path d="M1 22L8.500 4.500 16 22M3.600 16h9.800M14.500 5.500q2.200 2 2.200 5M16.500 1.500q5.500 4 5.500 10" /></Ico></Slot>
          <Slot $w={52}><Ico w={26} stroke="#a0a0a0" sw={1.4}><path d={starPath} /></Ico></Slot>
        </AddressBar>
        <Slot $w={66}><Ico w={24} vb="0 0 24 24" sw={1.6}><path d="M9.500 4H4Q1 4 1 7v10q0 3 3 3h5.500M14.500 4H20q3 0 3 3v10q0 3-3 3h-5.500M12 1v22" /></Ico></Slot>
        <Slot $w={66}><Ico w={25} vb="0 0 25 25" sw={1.6}><path d="M17 9.500l-2.500-.4L11.500 2 8.300 8.500l-7 .9L6.500 14l-1.500 8 6.500-4M17 9.500h7M15.500 14H24M15.500 18.500H24" /></Ico></Slot>
        <Slot $w={66}><Ico w={25} vb="0 0 25 25" sw={1.6}><rect x="8" y="8.500" width="16" height="15.500" rx="3" /><path d="M16 12.500v8M12 16.500h8M17.500 8.500l-1-5q-.6-2.500-3-2L3.500 4Q1 4.600 1.500 7l2.500 9q.6 2 4 1.500" /></Ico></Slot>
        <Slot $w={66}>
          <svg width="26" height="26" viewBox="0 0 26 26" fill="none" stroke="#fff" strokeWidth="1.600" strokeLinecap="round" strokeLinejoin="round">
            <path d="M2 10C.5 5.500 3 1.800 7 1.800c2.500 0 4.500 1 6 3.200 1.500-2.200 3.500-3.200 6-3.200 4 0 6.500 3.700 5 8.200M5.500 16l6 6.200M1.500 12.500h5l2.500-5 3.500 9 3-6 1.500 2h7" />
            <circle cx="20" cy="20.500" r="5.300" fill="#107c10" stroke="none" /><path d="M17.600 20.600l1.700 1.700 3-3.300" stroke="#0a3d0a" strokeWidth="1" />
          </svg>
        </Slot>
        <Slot $w={66}><svg width="20" height="4" viewBox="0 0 20 4" fill="#fff"><circle cx="2" cy="2" r="1.700" /><circle cx="10" cy="2" r="1.700" /><circle cx="18" cy="2" r="1.700" /></svg></Slot>
        <Slot $w={62}><Copilot /></Slot>
      </AddressRow>

      <Body>
        <Page>
          <Header>
            <Logo><SlidesLogo /></Logo>
            <TitleBlock>
              <TitleRow>
                <DocTitle>Mobile Application Development: Introduction</DocTitle>
                <TitleIcon><MdStarBorder size={27} /></TitleIcon>
                <TitleIcon><Drive /></TitleIcon>
                <TitleIcon><MdOutlineCloudDone size={27} /></TitleIcon>
              </TitleRow>
              <Menus><span>File</span><span>Edit</span><span>View</span><span>Tools</span><span>Help</span></Menus>
            </TitleBlock>
            <HeaderActions>
              <HeaderSlot><MdHistory size={34} color="#b4b6b8" /></HeaderSlot>
              <HeaderSlot><Camera /></HeaderSlot>
              <CallCaret><Caret /></CallCaret>
              <SplitButton><SplitMain>Slideshow</SplitMain><SplitArrow><Caret /></SplitArrow></SplitButton>
              <SplitButton $share>
                <SplitMain $share><MdOutlinePeopleAlt size={28} />Share</SplitMain><SplitArrow><Caret /></SplitArrow>
              </SplitButton>
              <Avatar>N</Avatar>
            </HeaderActions>
          </Header>

          <Main>
            <Left>
              <Toolbar>
                <Tool $w={51}><MdSearch size={28} /></Tool>
                <Tool $w={49}><MdOutlinePrint size={29} /></Tool>
                <ToolRule />
                <Tool $w={58}><MdZoomIn size={28} /></Tool>
                <Zoom>84%</Zoom>
                <Tool $w={34}><Caret /></Tool>
                <Pointer><Cursor /></Pointer>
                <ViewOnly><MdOutlineRemoveRedEye size={29} />View only</ViewOnly>
                <Spacer />
                <Tool $w={28}><MdKeyboardArrowUp size={28} /></Tool>
              </Toolbar>
              <Workspace>
                <Film>
                  <FilmScroll>
                    <FilmList>
                      <FilmItem no={63}>
                        <ThumbBody><ThumbText>
                          <ThumbTitle>General Project Requirements</ThumbTitle>
                          <ThumbPara>Other requirements that you must consider</ThumbPara>
                          <Bullets>
                            <Bullet>You can not use common applications such as E-commerce, Blog,<br />Product/Book/Food order, Todo, Chat ... as your project</Bullet>
                            <Bullet>You can not host your REST API, or Database on the internet, it should run<br />locally on your machine</Bullet>
                            <Bullet>You cannot use Firebase/Firestore as your backend and/or for<br />authentication/authorization purposes</Bullet>
                          </Bullets>
                        </ThumbText></ThumbBody>
                        <ThumbBar />
                      </FilmItem>
                      <FilmItem no={64} on><Shrink><CriteriaSlide small /></Shrink></FilmItem>
                      <FilmItem no={65}>
                        <ThumbBody><ThumbText>
                          <ThumbTitle>Authentication Related Requirement</ThumbTitle>
                          <ThumbPara $dark>Authentication feature should include the following capabilities</ThumbPara>
                          <MiniTable $serif $l={44.6} $w={96} $t={11}>
                            <MiniCell $b>Signup</MiniCell><MiniCell $b>Login/Logout</MiniCell><MiniCell>Change username (or password)</MiniCell><MiniCell>Delete Account</MiniCell>
                          </MiniTable>
                        </ThumbText></ThumbBody>
                        <ThumbBar />
                      </FilmItem>
                      <FilmItem no={66}>
                        <ThumbBody><ThumbText>
                          <ThumbTitle>Authentication Related Requirement</ThumbTitle>
                          <ThumbPara $dark>Authorization feature should include the following capabilities</ThumbPara>
                          <MiniTable $l={40.8} $w={118.5} $t={9.5}>
                            <MiniCell $b>Defining Roles</MiniCell><MiniCell>Assigning/Revoking roles to users</MiniCell>
                            <MiniCell $b $h={16}>Allowing/Restricting users access to certain<br />screens based on their permissions/roles</MiniCell><MiniCell>Removing Roles from the system</MiniCell>
                          </MiniTable>
                        </ThumbText></ThumbBody>
                        <ThumbBar />
                      </FilmItem>
                      <FilmItem no={67}>
                        <ThumbBody>
                          <ThumbText>
                            <ThumbTitle>Application Architecture</ThumbTitle>
                            <ThumbPara $ls={0.02}>Your project should have the&nbsp; architecture shown on<br />the right</ThumbPara>
                            <ThumbPara $mt={2.5}>Delivering DDD and it has</ThumbPara>
                          </ThumbText>
                          <Diagram />
                        </ThumbBody>
                      </FilmItem>
                    </FilmList>
                    <Track><Grip /></Track>
                  </FilmScroll>
                  <FilmFoot><MdGridView size={29} /><MdChevronLeft size={30} /></FilmFoot>
                </Film>
                <Canvas>
                  <SlideFrame><CriteriaSlide /></SlideFrame>
                  <NotesGrip />
                </Canvas>
              </Workspace>
            </Left>
            <Panel>
              <PanelTop>
                <PanelItem><Calendar /></PanelItem><PanelItem><Keep /></PanelItem><PanelItem><Tasks /></PanelItem>
                <PanelItem><Contacts /></PanelItem><PanelItem><Maps /></PanelItem>
              </PanelTop>
              <Spacer />
              <MdChevronRight size={29} />
            </Panel>
          </Main>
        </Page>
        <Sidebar>
          <SideItem $h={65}><SideSearch /></SideItem>
          <SideItem $h={59}><Tag /></SideItem>
          <SideItem $h={60}><Toolbox /></SideItem>
          <SideItem $h={60}><Chess /></SideItem>
          <SideItem $h={60}><M365 /></SideItem>
          <SideItem $h={60}><Outlook /></SideItem>
          <SideItem $h={60}><Plane /></SideItem>
          <SideItem $h={60}><FaSpotify size={24} color="#1ed760" /></SideItem>
          <SideGap />
          <SideRule />
          <SidePlus><Ico w={20} vb="0 0 20 20" stroke="#f0f0f0"><path d="M10 1v18M1 10h18" /></Ico><Dot /></SidePlus>
          <Spacer />
          <SideRule />
          <SideItem $h={61}><SideGear><Gear /></SideGear></SideItem>
        </Sidebar>
      </Body>
      <TaskStrip>
        <Strip $w={72} $c="#1c1a1c" /><Strip $w={432} $c="#555" /><Strip $w={77} $c="#1c1a1c" /><Strip $w={72} $c="#444" />
        <Strip $c="#1c1a1c" /><Strip $w={2} $c="#8a8a8a" /><Strip $w={6} $c="#1c1a1c" />
      </TaskStrip>
    </Window>
  );
}
